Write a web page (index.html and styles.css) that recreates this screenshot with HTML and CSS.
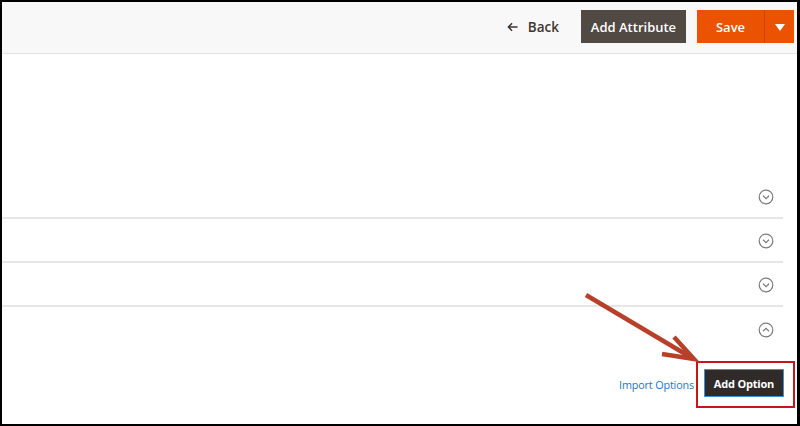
FILE: index.html
```html
<!DOCTYPE html>
<html>
<head>
<meta charset="utf-8">
<link rel="stylesheet" href="styles.css">
</head>
<body>
<div class="frame">
  <header class="page-actions">
    <a class="back"><svg class="back-arrow" viewBox="0 0 12 10"><path d="M11.5 5 H1.5 M5.5 1 L1.5 5 L5.5 9"/></svg>Back</a>
    <button class="btn btn-secondary">Add Attribute</button>
    <div class="split">
      <button class="btn btn-primary">Save</button>
      <button class="btn btn-primary toggle"><span class="caret"></span></button>
    </div>
  </header>
  <main class="content">
    <div class="spacer"></div>
    <section class="row">
      <svg class="chev" viewBox="0 0 16 16"><circle cx="8" cy="8" r="6.8"/><path d="M5 6.8 L8 9.6 L11 6.8"/></svg>
    </section>
    <section class="row">
      <svg class="chev" viewBox="0 0 16 16"><circle cx="8" cy="8" r="6.8"/><path d="M5 6.8 L8 9.6 L11 6.8"/></svg>
    </section>
    <section class="row">
      <svg class="chev" viewBox="0 0 16 16"><circle cx="8" cy="8" r="6.8"/><path d="M5 6.8 L8 9.6 L11 6.8"/></svg>
    </section>
    <section class="row open">
      <svg class="chev" viewBox="0 0 16 16"><circle cx="8" cy="8" r="6.8"/><path d="M5 9.2 L8 6.4 L11 9.2"/></svg>
    </section>
    <div class="options-actions">
      <a class="import">Import Options</a>
      <div class="highlight">
        <button class="btn-add">Add Option</button>
      </div>
    </div>
  </main>
  <svg class="annot-arrow" viewBox="0 0 800 426" width="800" height="426">
    <path d="M586 295 L692 358" />
    <path d="M674 337 L694 359 L662 354" fill="none"/>
  </svg>
</div>
</body>
</html>
```

FILE: styles.css
```css
* { box-sizing: border-box; }
html, body { margin: 0; padding: 0; }
body { font-family: "Open Sans", "Liberation Sans", sans-serif; background: #fff; }
.frame {
  position: relative;
  width: 800px;
  height: 426px;
  border: 2px solid #000;
  border-right-width: 3px;
  overflow: hidden;
  background: #fff;
}
.page-actions {
  height: 52px;
  background: #f8f8f8;
  border-bottom: 1px solid #e3e3e3;
  display: flex;
  align-items: flex-start;
  justify-content: flex-end;
  padding: 8px 0 0 0;
  padding-right: 1px;
}
.back {
  display: flex;
  align-items: center;
  height: 33px;
  color: #41362f;
  font-size: 13.5px;
  font-weight: 600;
  margin-right: 22px;
  white-space: nowrap;
}
.back-arrow {
  width: 11px;
  height: 10px;
  margin-right: 10px;
  fill: none;
  stroke: #41362f;
  stroke-width: 1.6;
}
.btn {
  height: 33px;
  border: 0;
  font-family: "Open Sans", "Liberation Sans", sans-serif;
  font-size: 13px;
  font-weight: 600;
  color: #fff;
  padding: 0;
  margin: 0;
  white-space: nowrap;
}
.btn-secondary {
  background: #514943;
  border: 1px solid #514943;
  width: 105px;
  margin-right: 11px;
}
.split { display: flex; margin-right: 2px; }
.btn-primary {
  background: #eb5202;
  width: 67px;
}
.toggle {
  width: 30px;
  border-left: 1px solid #c94600;
  display: flex;
  align-items: center;
  justify-content: center;
  padding: 0;
}
.caret {
  width: 0; height: 0;
  border-left: 5px solid transparent;
  border-right: 5px solid transparent;
  border-top: 7px solid #fff;
  margin-top: 2px;
}
.content {
  padding-right: 14px;
}
.spacer { height: 121px; }
.row {
  height: 44px;
  display: flex;
  align-items: center;
  justify-content: flex-end;
  border-bottom: 2px solid #e6e6e6;
  padding-right: 9px;
  padding-top: 2px;
}
.row.open { border-bottom: 0; padding-top: 2px; }
.chev {
  width: 16px;
  height: 16px;
  fill: none;
  stroke: #7b7b7b;
  stroke-width: 1.2;
}
.options-actions {
  display: flex;
  justify-content: flex-end;
  align-items: center;
  margin-top: 10px;
  margin-right: -12px;
}
.import {
  color: #1979c3;
  font-size: 10.8px;
  margin-right: 2px;
  letter-spacing: -0.15px;
  font-family: "Open Sans", "Liberation Sans", sans-serif;
}
.highlight {
  border: 2.5px solid #c8151b;
  padding: 6px 9px 9px 6px;
}
.btn-add {
  display: block;
  width: 80px;
  height: 28px;
  background: #302b29;
  border: 1px solid #3d8fd6;
  color: #fff;
  font-family: "Open Sans", "Liberation Sans", sans-serif;
  font-size: 11px;
  font-weight: 700;
  letter-spacing: -0.2px;
  padding: 0;
}
.annot-arrow {
  position: absolute;
  left: -2px;
  top: -2px;
  stroke: #b8402a;
  stroke-width: 4.5;
  stroke-linecap: butt;
  fill: none;
}
```
